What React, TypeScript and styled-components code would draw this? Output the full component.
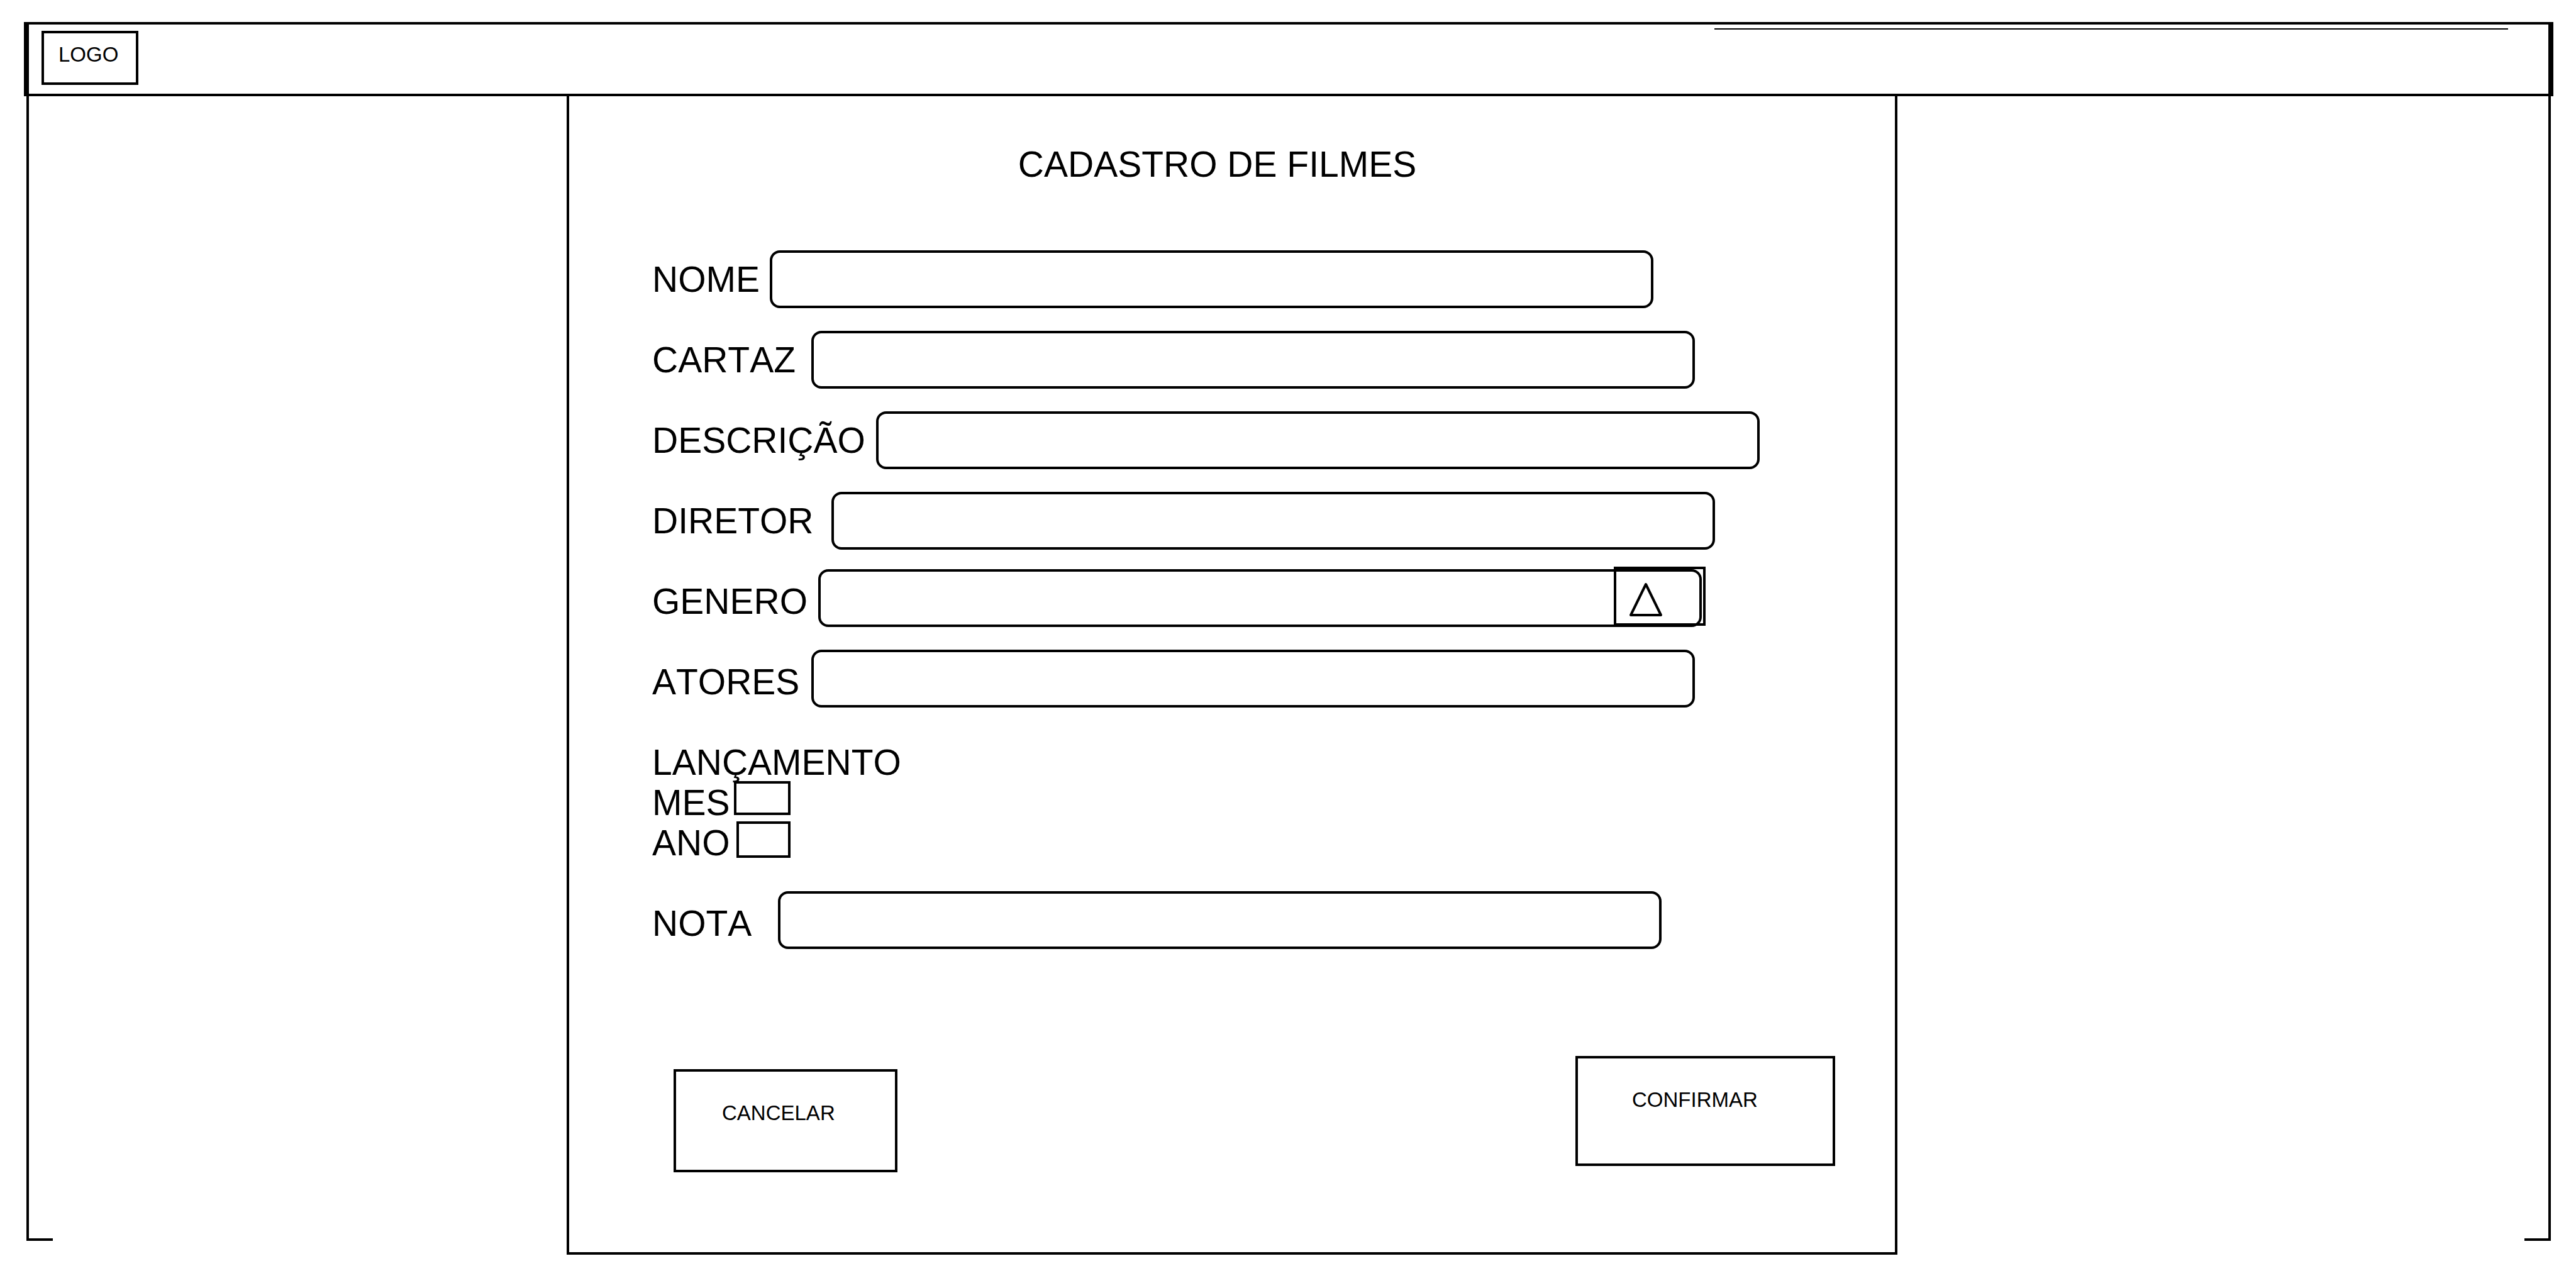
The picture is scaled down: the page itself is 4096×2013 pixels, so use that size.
import React from "react";
import styled, { createGlobalStyle, css } from "styled-components";

const GlobalStyle = createGlobalStyle`
  *, *::before, *::after { box-sizing: border-box; }
  body {
    margin: 0;
    background: #fff;
    color: #000;
    font-family: "Liberation Sans", Arial, Helvetica, sans-serif;
    font-kerning: none;
  }
`;

const line = "4px solid #000";

const smallText = css`
  font-family: inherit;
  font-size: 33px;
  font-kerning: none;
  line-height: 38px;
  color: #000;
`;

const bigText = css`
  font-size: 57px;
  font-weight: 400;
  line-height: 64px;
  white-space: nowrap;
`;

const Page = styled.div`
  display: flex;
  flex-direction: column;
  padding: 35px 0 18px;
`;

const Header = styled.header`
  display: flex;
  justify-content: space-between;
  align-items: flex-start;
  height: 118px;
  margin: 0 36px 0 38px;
  border: ${line};
  border-left-width: 8px;
  border-right-width: 8px;
`;

const Logo = styled.a`
  ${smallText}
  width: 154px;
  height: 86px;
  margin: 10px 0 0 20px;
  padding: 15px 23px;
  border: ${line};
  text-decoration: none;
`;

const HeaderRule = styled.hr`
  width: 31.5%;
  height: 2px;
  margin: 6px 64px 0 0;
  border: 0;
  background: #000;
`;

const Body = styled.div`
  display: grid;
  grid-template-columns: minmax(0, 859fr) minmax(0, 2116fr) minmax(0, 1039fr);
  margin: 0 40px 0 42px;
`;

const Rail = styled.div<{ $side: "left" | "right" }>`
  width: 42px;
  margin-bottom: 22px;
  justify-self: ${(p) => (p.$side === "left" ? "start" : "end")};
  border-bottom: ${line};
  border-${(p) => p.$side}: ${line};
`;

const Panel = styled.main`
  border: ${line};
  border-top: 0;
  padding: 76px 0 127px;
`;

const Title = styled.h1`
  ${bigText}
  margin: 0 0 87px;
  padding-right: 47px;
  text-align: center;
`;

const Fields = styled.div`
  display: flex;
  flex-direction: column;
  padding: 0 103px 0 132px;
`;

const Row = styled.div`
  display: flex;
  align-items: center;
  height: 128px;
`;

const Label = styled.label<{ $width: number }>`
  ${bigText}
  flex: 0 0 ${(p) => p.$width}px;
`;

const Control = styled.div<{ $raised?: boolean }>`
  position: relative;
  flex: 0 0 75%;
  height: 92px;
  margin-bottom: ${(p) => (p.$raised ? 10 : 0)}px;
`;

const fieldBox = css`
  display: block;
  width: 100%;
  height: 100%;
  margin: 0;
  padding: 0 24px;
  border: ${line};
  border-radius: 16px;
  background: #fff;
  color: #000;
  font-family: inherit;
  font-size: 57px;
`;

const TextInput = styled.input`
  ${fieldBox}
`;

const Select = styled.select`
  ${fieldBox}
  appearance: none;
`;

const SelectMark = styled.span`
  position: absolute;
  top: -4px;
  right: -6px;
  width: 146px;
  height: 94px;
  padding: 21px 20px;
  border: ${line};
  pointer-events: none;
`;

const Release = styled.fieldset`
  margin: 32px 0;
  padding: 0;
  border: 0;
  min-width: 0;
`;

const Legend = styled.legend`
  ${bigText}
  padding: 0;
`;

const DateRow = styled.div`
  display: flex;
  align-items: flex-start;
  height: 64px;
`;

const DateInput = styled.input<{ $width: number; $height: number }>`
  width: ${(p) => p.$width}px;
  height: ${(p) => p.$height}px;
  margin: -2px 0 0;
  padding: 0 8px;
  border: ${line};
  border-radius: 0;
  background: #fff;
  font-family: inherit;
  font-size: 33px;
`;

const Actions = styled.div`
  display: flex;
  justify-content: space-between;
  align-items: flex-start;
  margin-top: 147px;
  padding: 0 95px 0 166px;
`;

const Button = styled.button<{ $width: number; $height: number; $inset: number; $drop?: number }>`
  ${smallText}
  display: flex;
  align-items: flex-start;
  width: ${(p) => p.$width}px;
  height: ${(p) => p.$height}px;
  margin: ${(p) => p.$drop ?? 0}px 0 0;
  padding: 47px 0 0 ${(p) => p.$inset}px;
  border: ${line};
  border-radius: 0;
  background: #fff;
`;

type Field = {
  id: string;
  label: string;
  labelWidth: number;
  raised?: boolean;
  select?: boolean;
};

const fields: Field[] = [
  { id: "nome", label: "NOME", labelWidth: 187 },
  { id: "cartaz", label: "CARTAZ", labelWidth: 253 },
  { id: "descricao", label: "DESCRIÇÃO", labelWidth: 356 },
  { id: "diretor", label: "DIRETOR", labelWidth: 285 },
  { id: "genero", label: "GENERO", labelWidth: 264, raised: true, select: true },
  { id: "atores", label: "ATORES", labelWidth: 253, raised: true },
];

const rating: Field = { id: "nota", label: "NOTA", labelWidth: 200, raised: true };

function Triangle() {
  return (
    <svg width="54" height="54" viewBox="0 0 54 54" fill="none" aria-hidden="true" display="block">
      <path d="M27 3 L51 52 L3 52 Z" stroke="#000" strokeWidth="4" strokeLinejoin="round" />
    </svg>
  );
}

function FieldRow({ id, label, labelWidth, raised, select }: Field) {
  return (
    <Row>
      <Label htmlFor={id} $width={labelWidth}>
        {label}
      </Label>
      <Control $raised={raised}>
        {select ? (
          <>
            <Select id={id} name={id} defaultValue="">
              <option value="" />
            </Select>
            <SelectMark>
              <Triangle />
            </SelectMark>
          </>
        ) : (
          <TextInput id={id} name={id} type="text" />
        )}
      </Control>
    </Row>
  );
}

export default function App() {
  return (
    <>
      <GlobalStyle />
      <Page>
        <Header>
          <Logo href="#">LOGO</Logo>
          <HeaderRule />
        </Header>
        <Body>
          <Rail $side="left" />
          <Panel>
            <Title>CADASTRO DE FILMES</Title>
            <form onSubmit={(e) => e.preventDefault()}>
              <Fields>
                {fields.map((field) => (
                  <FieldRow key={field.id} {...field} />
                ))}
                <Release>
                  <Legend>LANÇAMENTO</Legend>
                  <DateRow>
                    <Label htmlFor="mes" $width={130}>
                      MES
                    </Label>
                    <DateInput id="mes" name="mes" type="text" $width={90} $height={54} />
                  </DateRow>
                  <DateRow>
                    <Label htmlFor="ano" $width={134}>
                      ANO
                    </Label>
                    <DateInput id="ano" name="ano" type="text" $width={86} $height={58} />
                  </DateRow>
                </Release>
                <FieldRow {...rating} />
              </Fields>
              <Actions>
                <Button type="button" $width={356} $height={164} $inset={73} $drop={21}>
                  CANCELAR
                </Button>
                <Button type="submit" $width={413} $height={175} $inset={86}>
                  CONFIRMAR
                </Button>
              </Actions>
            </form>
          </Panel>
          <Rail $side="right" />
        </Body>
      </Page>
    </>
  );
}
